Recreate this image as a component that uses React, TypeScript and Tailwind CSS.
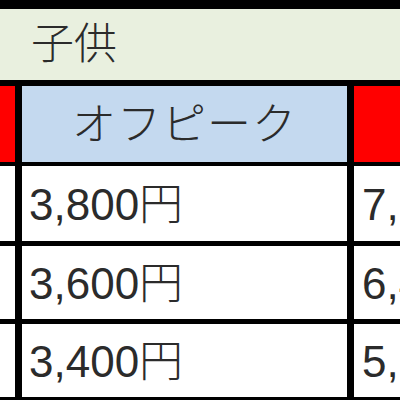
const font = {
  fontFamily: '"Liberation Sans", "Noto Sans CJK JP", sans-serif',
};

const rows = [
  { price: "3,800円", next: "7,600円", h: "h-[75px]" },
  { price: "3,600円", next: "6,400円", h: "h-[73px]" },
  { price: "3,400円", next: "5,200円", h: "h-[73px]" },
];

function PriceRow({ price, next, h, first }: { price: string; next: string; h: string; first?: boolean }) {
  return (
    <div className={`flex gap-[7px] ${h} ${first ? "mt-[4px]" : "mt-[5px]"}`}>
      <div className="w-[15px] shrink-0 bg-white" />
      <div className="w-[325px] shrink-0 bg-white flex items-center pl-[7px] pt-[3px]">
        <span className="text-[44px] leading-none text-[#2b2b2b] font-light">{price}</span>
      </div>
      <div className="flex-1 bg-white flex items-center pl-[8px] pt-[3px] overflow-hidden whitespace-nowrap">
        <span className="text-[44px] leading-none text-[#2b2b2b] font-light">{next}</span>
      </div>
    </div>
  );
}

export default function App() {
  return (
    <div className="w-[400px] h-[400px] bg-black overflow-hidden flex flex-col pt-[9px]" style={font}>
      {/* merged title row */}
      <div className="h-[71px] bg-[#e9f0df] flex items-center pl-[31px]">
        <span className="text-[43px] leading-none text-[#2b2b2b] font-light">子供</span>
      </div>

      {/* header row */}
      <div className="flex gap-[7px] h-[76px] mt-[6px]">
        <div className="w-[15px] shrink-0 bg-[#ff0000]" />
        <div className="w-[325px] shrink-0 bg-[#c4d9ef] flex items-center justify-center pt-[2px]">
          <span className="text-[44px] leading-none text-[#2b2b2b] font-light tracking-[1px]">オフピーク</span>
        </div>
        <div className="flex-1 bg-[#ff0000]" />
      </div>

      {rows.map((r, i) => (
        <PriceRow key={r.price} {...r} first={i === 0} />
      ))}
    </div>
  );
}
